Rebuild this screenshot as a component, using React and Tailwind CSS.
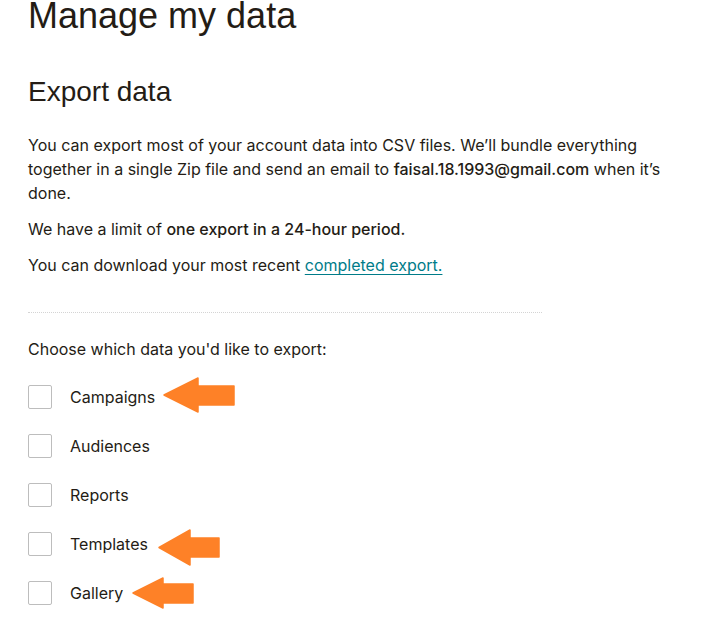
import React from 'react';

const items = [
  { name: 'Campaigns', arrow: { left: 135, top: -8, w: 72, h: 36, back: 35, y1: 9, y2: 28 } },
  { name: 'Audiences' },
  { name: 'Reports' },
  { name: 'Templates', arrow: { left: 130, top: -3, w: 62, h: 37, back: 32, y1: 9, y2: 28 } },
  { name: 'Gallery', arrow: { left: 104, top: -4, w: 62, h: 32, back: 31, y1: 7, y2: 26 } },
];

function Arrow({ a }) {
  const mid = a.h / 2;
  return (
    <svg
      className="absolute"
      style={{ left: a.left, top: a.top }}
      width={a.w}
      height={a.h}
      viewBox={`0 0 ${a.w} ${a.h}`}
    >
      <path
        d={`M1 ${mid} L${a.back} 1 L${a.back} ${a.y1} L${a.w - 1} ${a.y1} L${a.w - 1} ${a.y2} L${a.back} ${a.y2} L${a.back} ${a.h - 1} Z`}
        fill="#fe8127"
        stroke="#fe8127"
        strokeWidth="1.5"
        strokeLinejoin="round"
      />
    </svg>
  );
}

export default function App() {
  return (
    <div className="min-h-screen bg-white text-[#241c15] pl-[28px] font-['Inter',sans-serif]">
      <h1 className="font-['Liberation_Sans',Arial,sans-serif] text-[36px] leading-[32px] font-normal">
        Manage my data
      </h1>
      <h2 className="mt-[44px] font-['Liberation_Sans',Arial,sans-serif] text-[28px] leading-[32px] font-normal">
        Export data
      </h2>

      <div className="w-[640px] text-[16px] leading-[24px]">
        <p className="mt-[25px]">
          You can export most of your account data into CSV files. We’ll bundle everything together in a single Zip file and send an email to{' '}
          <span className="font-medium">faisal.18.1993@gmail.com</span> when it’s done.
        </p>
        <p className="mt-[12px]">
          We have a limit of <span className="font-medium">one export in a 24-hour period.</span>
        </p>
        <p className="mt-[12px]">
          You can download your most recent{' '}
          <a href="#" className="text-[#007c89] underline underline-offset-[3px]">
            completed export.
          </a>
        </p>
      </div>

      <div className="mt-[35px] w-[514px] border-t border-dotted border-[#d4d4d4]" />

      <p className="mt-[24px] text-[16px] leading-[24px]">Choose which data you'd like to export:</p>

      <div className="mt-[24px] flex flex-col gap-[25px]">
        {items.map((item) => (
          <label key={item.name} className="relative flex items-center h-[24px] text-[16px] leading-[24px]">
            <span className="w-[24px] h-[24px] rounded-[2px] border border-[#bdbdbd] bg-white shrink-0" />
            <span className="ml-[18px]">{item.name}</span>
            {item.arrow && <Arrow a={item.arrow} />}
          </label>
        ))}
      </div>
    </div>
  );
}
